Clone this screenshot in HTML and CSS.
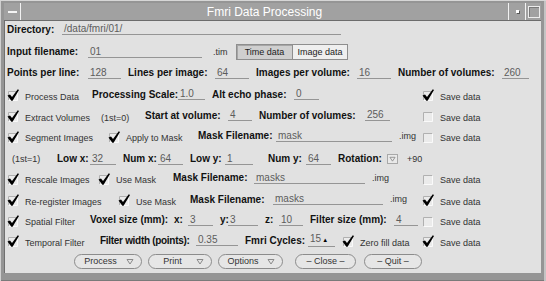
FILE: index.html
```html
<!DOCTYPE html>
<html lang="en">
<head>
    <meta charset="UTF-8">
    <title>Fmri Data Processing</title>
    <link rel="stylesheet" href="styles.css">
</head>
<body>

<svg class="defs" width="0" height="0">
    <symbol id="box-off" viewBox="0 0 12 12">
        <rect x="1.5" y="2.5" width="9" height="9" fill="#ebebeb"/>
        <path d="M1.5 11.5V2.5h9" fill="none" stroke="#b0b0b0"/>
        <path d="M10.5 2.5v9h-9" fill="none" stroke="#fafafa"/>
    </symbol>
    <symbol id="box-on" viewBox="0 0 12 12">
        <rect x="1.5" y="2.5" width="9" height="9" fill="#ebebeb"/>
        <path d="M1.5 11.5V2.5h9" fill="none" stroke="#b0b0b0"/>
        <path d="M10.5 2.5v9h-9" fill="none" stroke="#fafafa"/>
        <path d="M0.5 6.5L3 5.5L5 8L10.8 0.2L12 1L5.6 11.8H4.3Z" fill="#000"/>
    </symbol>
    <symbol id="tri" viewBox="0 0 8 7">
        <path d="M1 1.5h6L4 6z" fill="none" stroke="#8a8a8a"/>
    </symbol>
</svg>

<div class="window">
    <div class="titlebar">
        <div class="wmenu"><span class="dash"></span></div>
        <div class="title">Fmri Data Processing</div>
        <div class="wbtn"><span class="dot"></span></div>
        <div class="wbtn last"><span class="sq"></span></div>
    </div>

    <div class="panel">
        <!-- file settings -->
        <div class="row dir">
            <span class="lbl w55">Directory:</span>
            <span class="fld w279">/data/fmri/01/</span>
        </div>
        <div class="row top">
            <span class="lbl w81">Input filename:</span>
            <span class="fld w114">01</span>
            <span class="sfx ml4 w23">.tim</span>
            <div class="tabs">
                <span class="tab on">Time data</span>
                <span class="tab">Image data</span>
            </div>
        </div>
        <div class="row">
            <span class="lbl w81">Points per line:</span>
            <span class="fld w33">128</span>
            <span class="lbl w87">Lines per image:</span>
            <span class="fld w34">64</span>
            <span class="lbl w101">Images per volume:</span>
            <span class="fld w34">16</span>
            <span class="lbl w104">Number of volumes:</span>
            <span class="fld w27">260</span>
        </div>

        <!-- processing steps -->
        <div class="row cb sep">
            <label class="chk w85"><svg><use href="#box-on"/></svg>Process Data</label>
            <span class="lbl w86">Processing Scale:</span>
            <span class="fld w27">1.0</span>
            <span class="lbl w82">Alt echo phase:</span>
            <span class="fld w25">0</span>
            <label class="chk save"><svg><use href="#box-on"/></svg>Save data</label>
        </div>
        <div class="row cb">
            <label class="chk w94"><svg><use href="#box-on"/></svg>Extract Volumes</label>
            <span class="txt w44">(1st=0)</span>
            <span class="lbl w83">Start at volume:</span>
            <span class="fld w24">4</span>
            <span class="lbl w106">Number of volumes:</span>
            <span class="fld w25">256</span>
            <label class="chk save"><svg><use href="#box-off"/></svg>Save data</label>
        </div>
        <div class="row cb short">
            <label class="chk w101"><svg><use href="#box-on"/></svg>Segment Images</label>
            <label class="chk w90"><svg><use href="#box-on"/></svg>Apply to Mask</label>
            <span class="lbl w78">Mask Filename:</span>
            <span class="fld w116">mask</span>
            <span class="sfx">.img</span>
            <label class="chk save"><svg><use href="#box-off"/></svg>Save data</label>
        </div>
        <div class="row">
            <span class="txt w50 pl5">(1st=1)</span>
            <span class="lbl w33">Low x:</span>
            <span class="fld w26">32</span>
            <span class="lbl w35">Num x:</span>
            <span class="fld w25">64</span>
            <span class="lbl w35">Low y:</span>
            <span class="fld w28 mr15">1</span>
            <span class="lbl w38">Num y:</span>
            <span class="fld w25">64</span>
            <span class="lbl w49">Rotation:</span>
            <span class="drop"><svg><use href="#tri"/></svg></span>
            <span class="txt ml9">+90</span>
        </div>
        <div class="row cb tall">
            <label class="chk w91"><svg><use href="#box-on"/></svg>Rescale Images</label>
            <label class="chk w75"><svg><use href="#box-on"/></svg>Use Mask</label>
            <span class="lbl w81">Mask Filename:</span>
            <span class="fld w111">masks</span>
            <span class="sfx">.img</span>
            <label class="chk save"><svg><use href="#box-off"/></svg>Save data</label>
        </div>
        <div class="row cb">
            <label class="chk w111"><svg><use href="#box-on"/></svg>Re-register Images</label>
            <label class="chk w72"><svg><use href="#box-on"/></svg>Use Mask</label>
            <span class="lbl w83">Mask Filename:</span>
            <span class="fld w110">masks</span>
            <span class="sfx">.img</span>
            <label class="chk save"><svg><use href="#box-on"/></svg>Save data</label>
        </div>
        <div class="row cb short">
            <label class="chk w83"><svg><use href="#box-on"/></svg>Spatial Filter</label>
            <span class="lbl w84">Voxel size (mm):</span>
            <span class="lbl w14">x:</span>
            <span class="fld w25">3</span>
            <span class="lbl w8">y:</span>
            <span class="fld w30">3</span>
            <span class="lbl w14">z:</span>
            <span class="fld w24">10</span>
            <span class="lbl w84">Filter size (mm):</span>
            <span class="fld w24 mr0">4</span>
            <label class="chk save"><svg><use href="#box-off"/></svg>Save data</label>
        </div>
        <div class="row cb">
            <label class="chk w93"><svg><use href="#box-on"/></svg>Temporal Filter</label>
            <span class="lbl w96 tight">Filter width (points):</span>
            <span class="fld w42">0.35</span>
            <span class="lbl w63">Fmri Cycles:</span>
            <span class="fld w27">15<span class="cursor">&#9650;</span></span>
            <label class="chk"><svg><use href="#box-on"/></svg>Zero fill data</label>
            <label class="chk save"><svg><use href="#box-on"/></svg>Save data</label>
        </div>

        <!-- commands -->
        <div class="actions">
            <span class="btn menu w68"><span class="cap">Process</span><svg><use href="#tri"/></svg></span>
            <span class="btn menu w64"><span class="cap">Print</span><svg><use href="#tri"/></svg></span>
            <span class="btn menu w65"><span class="cap">Options</span><svg><use href="#tri"/></svg></span>
            <span class="btn w61 ml12">&ndash; Close &ndash;</span>
            <span class="btn w58 ml8">&ndash; Quit &ndash;</span>
        </div>
    </div>
</div>

</body>
</html>
```

FILE: styles.css
```css
* {
    box-sizing: border-box;
}
body {
    margin: 0;
    background: #ffffff;
    font-family: "Liberation Sans", Arial, sans-serif;
}
.defs {
    position: absolute;
    width: 0;
    height: 0;
}

/* window frame */
.window {
    width: 546px;
    height: 281px;
    padding: 3px 5px 8px 4px;
    display: flex;
    flex-direction: column;
    background: #959595;
    box-shadow: inset 0 1px 0 #d6d6d6, inset 1px 0 0 #d0d0d0, inset -2px 0 0 #c4c4c4, inset 0 -1px 0 #7a7a7a;
}
.titlebar {
    height: 18px;
    display: flex;
    flex: none;
    background: #a1a1a1;
    border-bottom: 1px solid #6c6c6c;
    color: #ffffff;
}
.wmenu {
    width: 17px;
    border-right: 1px solid #f2f2f2;
    display: flex;
    align-items: center;
    justify-content: center;
}
.dash {
    width: 9px;
    height: 2px;
    background: #f4f4f4;
}
.title {
    flex: 1;
    text-align: center;
    font-size: 12px;
    line-height: 18px;
}
.wbtn {
    width: 17px;
    border-left: 1px solid #f2f2f2;
    display: flex;
    align-items: center;
    justify-content: center;
}
.wbtn.last {
    width: 16px;
}
.dot {
    width: 3px;
    height: 3px;
    background: #ffffff;
    box-shadow: 1px 1px 0 #555555;
}
.sq {
    width: 12px;
    height: 12px;
    margin-top: 1px;
    border: 1px solid #ececec;
    box-shadow: inset 1px 1px 0 #7a7a7a;
}

/* panel */
.panel {
    flex: 1;
    background: #e1e1e1;
    border-left: 1px solid #707070;
    padding-left: 2px;
}
.row {
    height: 21px;
    display: flex;
    align-items: center;
}
.row.dir { height: 16px; }
.row.top { margin-top: 4px; }
.row.sep { margin-top: 3px; }
.row.short { height: 20px; }
.row.tall { height: 22px; }

.lbl {
    flex: none;
    font-size: 10px;
    font-weight: bold;
    color: #111111;
    white-space: nowrap;
}
.lbl.tight { letter-spacing: -0.3px; }
.fld {
    flex: none;
    margin-right: 7px;
    padding-left: 2px;
    font-size: 10px;
    line-height: 11px;
    color: #5c5c5c;
    border-bottom: 1px solid #959595;
    white-space: nowrap;
}
.txt, .sfx {
    flex: none;
    font-size: 9px;
    color: #333333;
    white-space: nowrap;
}
.cb .lbl, .cb .fld, .cb .sfx {
    margin-bottom: 5px;
}
.cursor {
    font-size: 6px;
    color: #000000;
    margin-left: 1px;
}

.chk {
    flex: none;
    display: flex;
    align-items: center;
    font-size: 9px;
    color: #333333;
    white-space: nowrap;
}
.chk svg {
    width: 12px;
    height: 12px;
    margin: 0 6px 3px 0;
    flex: none;
}
.chk.save {
    margin-left: auto;
    width: 119px;
}

.tabs {
    display: flex;
    flex: none;
}
.tab {
    width: 56px;
    height: 16px;
    display: flex;
    align-items: center;
    justify-content: center;
    font-size: 9px;
    color: #222222;
    background: #efefef;
    border: 1px solid #8e8e8e;
}
.tab.on {
    background: #cfcfcf;
    border-right: none;
    box-shadow: inset 1px 1px 0 #a6a6a6;
}

.drop {
    flex: none;
    width: 11px;
    height: 10px;
    display: flex;
    align-items: center;
    justify-content: center;
    background: #e9e9e9;
    border: 1px solid #a8a8a8;
}
.drop svg {
    width: 7px;
    height: 6px;
}

/* command buttons */
.actions {
    height: 16px;
    display: flex;
    align-items: center;
    padding-left: 67px;
}
.btn {
    flex: none;
    height: 15px;
    display: flex;
    align-items: center;
    justify-content: center;
    font-size: 9px;
    color: #333333;
    background: #e6e6e6;
    border: 1px solid #8c8c8c;
    border-radius: 8px;
}
.btn + .btn { margin-left: 6px; }
.btn.menu svg {
    width: 8px;
    height: 7px;
    margin-right: 7px;
    flex: none;
}
.btn .cap {
    flex: 1;
    text-align: center;
}

/* spacing and width helpers */
.pl5 { padding-left: 5px; }
.ml4 { margin-left: 4px; }
.ml9 { margin-left: 9px; }
.btn.ml8 { margin-left: 8px; }
.btn.ml12 { margin-left: 12px; }
.fld.mr15 { margin-right: 15px; }
.fld.mr0 { margin-right: 0; }

.w8 { width: 8px; }
.w14 { width: 14px; }
.w23 { width: 23px; }
.w24 { width: 24px; }
.w25 { width: 25px; }
.w26 { width: 26px; }
.w27 { width: 27px; }
.w28 { width: 28px; }
.w30 { width: 30px; }
.w33 { width: 33px; }
.w34 { width: 34px; }
.w35 { width: 35px; }
.w38 { width: 38px; }
.w42 { width: 42px; }
.w44 { width: 44px; }
.w49 { width: 49px; }
.w50 { width: 50px; }
.w55 { width: 55px; }
.w58 { width: 58px; }
.w61 { width: 61px; }
.w63 { width: 63px; }
.w64 { width: 64px; }
.w65 { width: 65px; }
.w68 { width: 68px; }
.w72 { width: 72px; }
.w75 { width: 75px; }
.w78 { width: 78px; }
.w81 { width: 81px; }
.w82 { width: 82px; }
.w83 { width: 83px; }
.w84 { width: 84px; }
.w85 { width: 85px; }
.w86 { width: 86px; }
.w87 { width: 87px; }
.w90 { width: 90px; }
.w91 { width: 91px; }
.w93 { width: 93px; }
.w94 { width: 94px; }
.w96 { width: 96px; }
.w101 { width: 101px; }
.w104 { width: 104px; }
.w106 { width: 106px; }
.w110 { width: 110px; }
.w111 { width: 111px; }
.w114 { width: 114px; }
.w116 { width: 116px; }
.w279 { width: 279px; }
```
